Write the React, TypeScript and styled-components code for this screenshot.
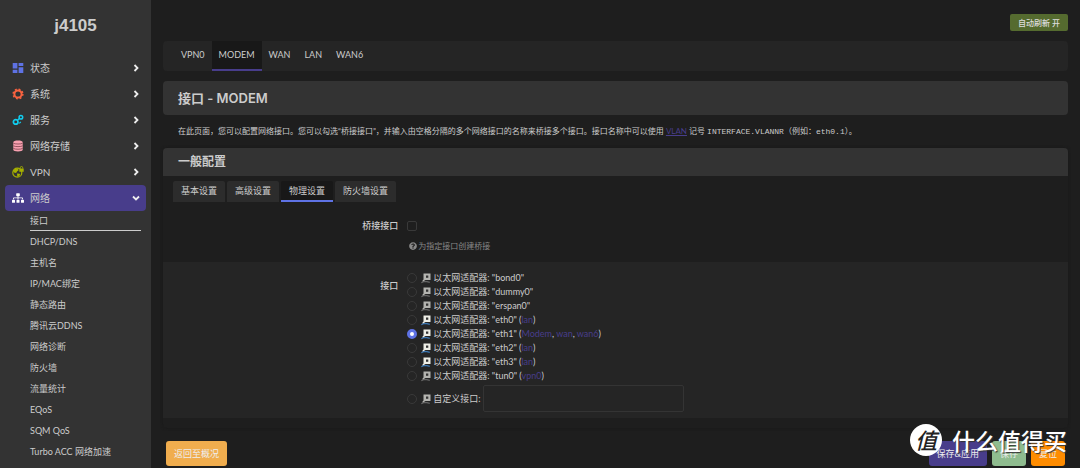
import React from "react";
import styled, { createGlobalStyle, css } from "styled-components";
import { FaSitemap, FaQuestionCircle } from "react-icons/fa";

const sans = '"Lato", "Noto Sans CJK SC", sans-serif';
const purple = "#483d8b";

const GlobalStyle = createGlobalStyle`
  * { box-sizing: border-box; }
  body {
    margin: 0;
    background: #1e1e1e;
    color: #ccc;
    font: 9px/14px ${sans};
    overflow: hidden;
  }
  button, input { font-family: inherit; }
  a { color: inherit; text-decoration: none; }
  ul { list-style: none; margin: 0; padding: 0; }
`;

const Page = styled.div`
  display: flex;
  height: 100vh;
  overflow: hidden;
`;

const Sidebar = styled.aside`
  flex: 0 0 151px;
  background: #333;
  padding: 0 5px;
`;

const Brand = styled.a`
  display: block;
  height: 55px;
  padding-top: 14px;
  text-align: center;
  font: bold 17px/23px "Liberation Sans", sans-serif;
`;

const MenuLink = styled.a<{ $open?: boolean }>`
  display: flex;
  align-items: center;
  height: 26px;
  padding: 0 6px 0 7px;
  border-radius: 4px;
  font-size: 10px;
  color: #ccc;
  ${(p) => p.$open && css`background: ${purple};`}
  & > span { flex: 1; margin-left: 6px; }
  & > svg { display: block; }
`;

const SubMenu = styled.ul`
  padding: 0 5px 0 25px;
`;

const SubLink = styled.a<{ $active?: boolean }>`
  display: block;
  height: 21px;
  line-height: 20px;
  white-space: nowrap;
  ${(p) => p.$active && css`
    height: 20px;
    margin-bottom: 1px;
    line-height: 19px;
    border-bottom: 1px solid #ccc;
  `}
`;

const Main = styled.main`
  flex: 1;
  min-width: 0;
  padding: 14px 12px 0;
`;

const TopBar = styled.div`
  display: flex;
  justify-content: flex-end;
  margin-bottom: 10px;
`;

const RefreshButton = styled.button`
  height: 17px;
  padding: 0 8px;
  border: 0;
  border-radius: 2px;
  background: #556b2f;
  color: #ddd;
  font-size: 8px;
  font-weight: 500;
  line-height: 16px;
`;

const Tabs = styled.nav`
  display: flex;
  height: 30px;
  padding-left: 11px;
  border-radius: 4px;
  background: #252525;
`;

const Tab = styled.a<{ $active?: boolean }>`
  padding: 0 7px;
  line-height: 28px;
  border-bottom: 2px solid transparent;
  ${(p) => p.$active && css`background: #181818; border-color: ${purple};`}
`;

const Title = styled.h2`
  margin: 10px 0;
  padding: 0 15px;
  border-radius: 4px;
  background: #333;
  font-family: "Inter", "Noto Sans CJK SC", sans-serif;
  font-size: 13px;
  font-weight: 600;
  line-height: 34px;
`;

const Description = styled.p`
  margin: 0;
  padding: 0 15px;
  font-size: 8px;
  line-height: 13px;
  a { color: ${purple}; text-decoration: underline; }
  code { font: 8px "Liberation Mono", "Noto Sans CJK SC", monospace; }
`;

const Section = styled.section`
  margin: 10px 0 13px;
  padding-bottom: 10px;
  border-radius: 4px;
  box-shadow: 0 0 3px #171717;
`;

const SectionTitle = styled.h3`
  margin: 0;
  padding: 0 15px;
  border-radius: 4px 4px 0 0;
  background: #333;
  font-size: 12px;
  font-weight: 600;
  line-height: 28px;
`;

const SubTabs = styled.div`
  display: flex;
  gap: 2px;
  padding: 5px 10px 4px;
`;

const SubTab = styled.button<{ $active?: boolean }>`
  height: 21px;
  padding: 0 8px;
  border: 0;
  border-bottom: 2px solid ${(p) => (p.$active ? "#5e72e4" : "#2c2c2c")};
  border-radius: 2px 2px 0 0;
  background: ${(p) => (p.$active ? "#181818" : "#2c2c2c")};
  color: #ccc;
  font-size: 9px;
  line-height: 18px;
`;

const Row = styled.div<{ $shaded?: boolean }>`
  display: grid;
  grid-template-columns: 26% 1fr;
  column-gap: 9px;
  padding: ${(p) => (p.$shaded ? "9px 0 6px" : "13px 0 9px")};
  background: ${(p) => (p.$shaded ? "#252525" : "transparent")};
`;

const RowLabel = styled.label<{ $low?: boolean }>`
  text-align: right;
  font-weight: 500;
  padding-top: ${(p) => (p.$low ? "8px" : "0")};
`;

const Check = styled.input`
  display: block;
  appearance: none;
  width: 10px;
  height: 10px;
  margin: 2px 0 8px;
  border: 1px solid #393939;
  border-radius: 2px;
`;

const Hint = styled.div`
  display: flex;
  align-items: center;
  gap: 1px;
  padding-left: 2px;
  font-size: 8px;
  color: #888;
`;

const Options = styled.div`
  display: flex;
  flex-direction: column;
`;

const Option = styled.label`
  display: flex;
  align-items: center;
  height: 14px;
  white-space: pre;
  svg { margin: 0 2px 0 4px; }
  a { color: ${purple}; }
`;

const Radio = styled.input`
  appearance: none;
  width: 10px;
  height: 10px;
  margin: 0;
  border: 1px solid #393939;
  border-radius: 50%;
  &:checked { border: 3px solid #5e72e4; background: #fff; }
`;

const CustomRow = styled.div`
  display: flex;
  align-items: center;
  gap: 2px;
  padding-top: 2px;
`;

const TextInput = styled.input`
  width: 201px;
  height: 27px;
  border: 1px solid #343434;
  border-radius: 2px;
  background: transparent;
  color: #ccc;
  font-size: 9px;
`;

const Actions = styled.div`
  display: flex;
  gap: 5px;
  padding: 0 3px;
`;

const ActionButton = styled.button<{ $color: string; $first?: boolean }>`
  height: 25px;
  padding: 0 8px;
  border: 0;
  border-radius: 3px;
  background: ${(p) => p.$color};
  color: #eee;
  font-size: 9px;
  line-height: 24px;
  margin-right: ${(p) => (p.$first ? "auto" : "0")};
`;

const Watermark = styled.div`
  position: absolute;
  right: 13px;
  bottom: 11px;
  display: flex;
  align-items: center;
  gap: 10px;
  color: #fff;
  font: 500 23px/34px "Noto Sans CJK SC", sans-serif;
  text-shadow: 1px 1px 1px #333;
`;

const Seal = styled.span`
  width: 32px;
  height: 32px;
  border-radius: 50%;
  background: #fff;
  color: #222;
  text-align: center;
  text-shadow: none;
  font: italic 500 22px/31px "Noto Sans CJK SC", sans-serif;
`;

const StatusIcon = () => (
  <svg width="12" height="12" viewBox="0 0 12 12" fill="#5e72e4">
    <path d="M.7 1h4.700v5.500H.7zM6.600 1h4.700v3H6.600zM.7 7.700h4.700v3.300H.7zM6.600 5.200h4.700V11H6.600z" />
  </svg>
);

const GearIcon = () => (
  <svg width="12" height="12" viewBox="0 0 12 12" fill="none" stroke="#fb6340">
    <circle cx="6" cy="6" r="3.600" strokeWidth="2" />
    <circle cx="6" cy="6" r="4.900" strokeWidth="1.400" strokeDasharray="1.925 1.925" />
  </svg>
);

const ServicesIcon = () => (
  <svg width="12" height="12" viewBox="0 0 12 12" fill="none" stroke="#11cdef">
    <circle cx="3.700" cy="7.900" r="2.300" strokeWidth="1.700" />
    <circle cx="8.900" cy="3.200" r="1.800" strokeWidth="1.500" />
    <path d="M5.500 6.200 7.300 4.600" strokeWidth="1.300" />
    <path d="M7.300 9.300 8.800 7.800" strokeWidth="1.200" />
  </svg>
);

const StorageIcon = () => (
  <svg width="12" height="12" viewBox="0 0 12 12">
    <path d="M1.300 2.200C1.300 1.200 3.300.5 6 .5s4.700.7 4.700 1.700v7.600c0 1-2 1.700-4.700 1.700s-4.700-.7-4.700-1.700z" fill="#f8a0b0" />
    <path d="M1.300 3.200C3 4.300 9 4.300 10.700 3.200M1.300 5.800C3 6.900 9 6.900 10.700 5.800M1.300 8.400C3 9.500 9 9.500 10.700 8.400" fill="none" stroke="#8a4c58" strokeWidth=".9" />
  </svg>
);

const GlobeIcon = () => (
  <svg width="12" height="12" viewBox="0 0 12 12">
    <circle cx="5.300" cy="6.700" r="4.500" fill="none" stroke="#a6b000" strokeWidth="1.200" />
    <path d="M1.200 5.500 3 3l3-.8.600 2L5 5.400l-.600 1.400L2.900 7zM5 7.400l2.600.3.700 1L6.500 10.800H5.300z" fill="#a6b000" />
    <path d="M7.300 2.500h4.400v3.300H7.300z" fill="#a6b000" />
    <path d="M8.300 2.500V1.700a1.200 1.200 0 0 1 2.400 0v.8" fill="none" stroke="#a6b000" strokeWidth=".9" />
  </svg>
);

const PortIcon = ({ up }: { up?: boolean }) => (
  <svg width="10" height="12" viewBox="0 0 10 12">
    <path d="M.3 10.800 2.500 9.700H6L8.800 10.300" fill="none" stroke={up ? "#3c78b4" : "#666"} strokeWidth="1.200" />
    <path d="M2.500 1.500H9.500V8H4.500L2.500 9.300 1 9.300 2.500 7.500z" fill={up ? "#eeeee6" : "#b4b4b0"} />
    <path d="M5 3.500h2.300v2.300H5z" fill="#333" />
  </svg>
);

const Chevron = ({ down }: { down?: boolean }) => (
  <svg width="8" height="8" viewBox="0 0 8 8" fill="none" stroke="#eee" strokeWidth="1.800">
    <path d={down ? "M1 2.500 4 5.500 7 2.500" : "M2.500 1 5.500 4 2.500 7"} />
  </svg>
);

const menu = [
  { label: "状态", icon: <StatusIcon /> },
  { label: "系统", icon: <GearIcon /> },
  { label: "服务", icon: <ServicesIcon /> },
  { label: "网络存储", icon: <StorageIcon /> },
  { label: "VPN", icon: <GlobeIcon /> },
  { label: "网络", icon: <FaSitemap size={12} color="#fff" />, open: true },
];

const subMenu = [
  "接口", "DHCP/DNS", "主机名", "IP/MAC绑定", "静态路由", "腾讯云DDNS",
  "网络诊断", "防火墙", "流量统计", "EQoS", "SQM QoS", "Turbo ACC 网络加速",
];

const adapters: { name: string; up?: boolean; nets: string[] }[] = [
  { name: "bond0", nets: [] },
  { name: "dummy0", nets: [] },
  { name: "erspan0", nets: [] },
  { name: "eth0", up: true, nets: ["lan"] },
  { name: "eth1", up: true, nets: ["Modem", "wan", "wan6"] },
  { name: "eth2", up: true, nets: ["lan"] },
  { name: "eth3", up: true, nets: ["lan"] },
  { name: "tun0", nets: ["vpn0"] },
];

export default function App() {
  return (
    <>
      <GlobalStyle />
      <Page>
        <Sidebar>
          <Brand href="#">j4105</Brand>
          <ul>
            {menu.map((m) => (
              <li key={m.label}>
                <MenuLink href="#" $open={m.open}>
                  {m.icon}
                  <span>{m.label}</span>
                  <Chevron down={m.open} />
                </MenuLink>
              </li>
            ))}
          </ul>
          <SubMenu>
            {subMenu.map((s, i) => (
              <li key={s}>
                <SubLink href="#" $active={i === 0}>{s}</SubLink>
              </li>
            ))}
          </SubMenu>
        </Sidebar>
        <Main>
          <TopBar>
            <RefreshButton>自动刷新 开</RefreshButton>
          </TopBar>
          <Tabs>
            {["VPN0", "MODEM", "WAN", "LAN", "WAN6"].map((t) => (
              <Tab key={t} href="#" $active={t === "MODEM"}>{t}</Tab>
            ))}
          </Tabs>
          <Title>接口 - MODEM</Title>
          <Description>
            在此页面，您可以配置网络接口。您可以勾选“桥接接口”，并输入由空格分隔的多个网络接口的名称来桥接多个接口。接口名称中可以使用{" "}
            <a href="#">VLAN</a> 记号 <code>INTERFACE.VLANNR</code>（例如：<code>eth0.1</code>）。
          </Description>
          <Section>
            <SectionTitle>一般配置</SectionTitle>
            <SubTabs>
              {["基本设置", "高级设置", "物理设置", "防火墙设置"].map((t) => (
                <SubTab key={t} $active={t === "物理设置"}>{t}</SubTab>
              ))}
            </SubTabs>
            <Row>
              <RowLabel htmlFor="bridge">桥接接口</RowLabel>
              <div>
                <Check type="checkbox" id="bridge" />
                <Hint><FaQuestionCircle size={8} />为指定接口创建桥接</Hint>
              </div>
            </Row>
            <Row $shaded>
              <RowLabel $low htmlFor="if-eth1">接口</RowLabel>
              <Options>
                {adapters.map((a) => (
                  <Option key={a.name}>
                    <Radio type="radio" name="iface" id={"if-" + a.name} defaultChecked={a.name === "eth1"} />
                    <PortIcon up={a.up} />
                    <span>
                      以太网适配器: "{a.name}"
                      {a.nets.length > 0 && " ("}
                      {a.nets.map((n, i) => (
                        <React.Fragment key={n}>
                          {i > 0 && ", "}
                          <a href="#">{n}</a>
                        </React.Fragment>
                      ))}
                      {a.nets.length > 0 && ")"}
                    </span>
                  </Option>
                ))}
                <CustomRow>
                  <Option>
                    <Radio type="radio" name="iface" />
                    <PortIcon />
                    <span>自定义接口:</span>
                  </Option>
                  <TextInput type="text" aria-label="自定义接口" />
                </CustomRow>
              </Options>
            </Row>
          </Section>
          <Actions>
            <ActionButton $color="#f0ad4e" $first>返回至概况</ActionButton>
            <ActionButton $color={purple}>保存&amp;应用</ActionButton>
            <ActionButton $color="#8fbc8f">保存</ActionButton>
            <ActionButton $color="#ff8c00">复位</ActionButton>
          </Actions>
        </Main>
      </Page>
      <Watermark>
        <Seal>值</Seal>
        <span>什么值得买</span>
      </Watermark>
    </>
  );
}
